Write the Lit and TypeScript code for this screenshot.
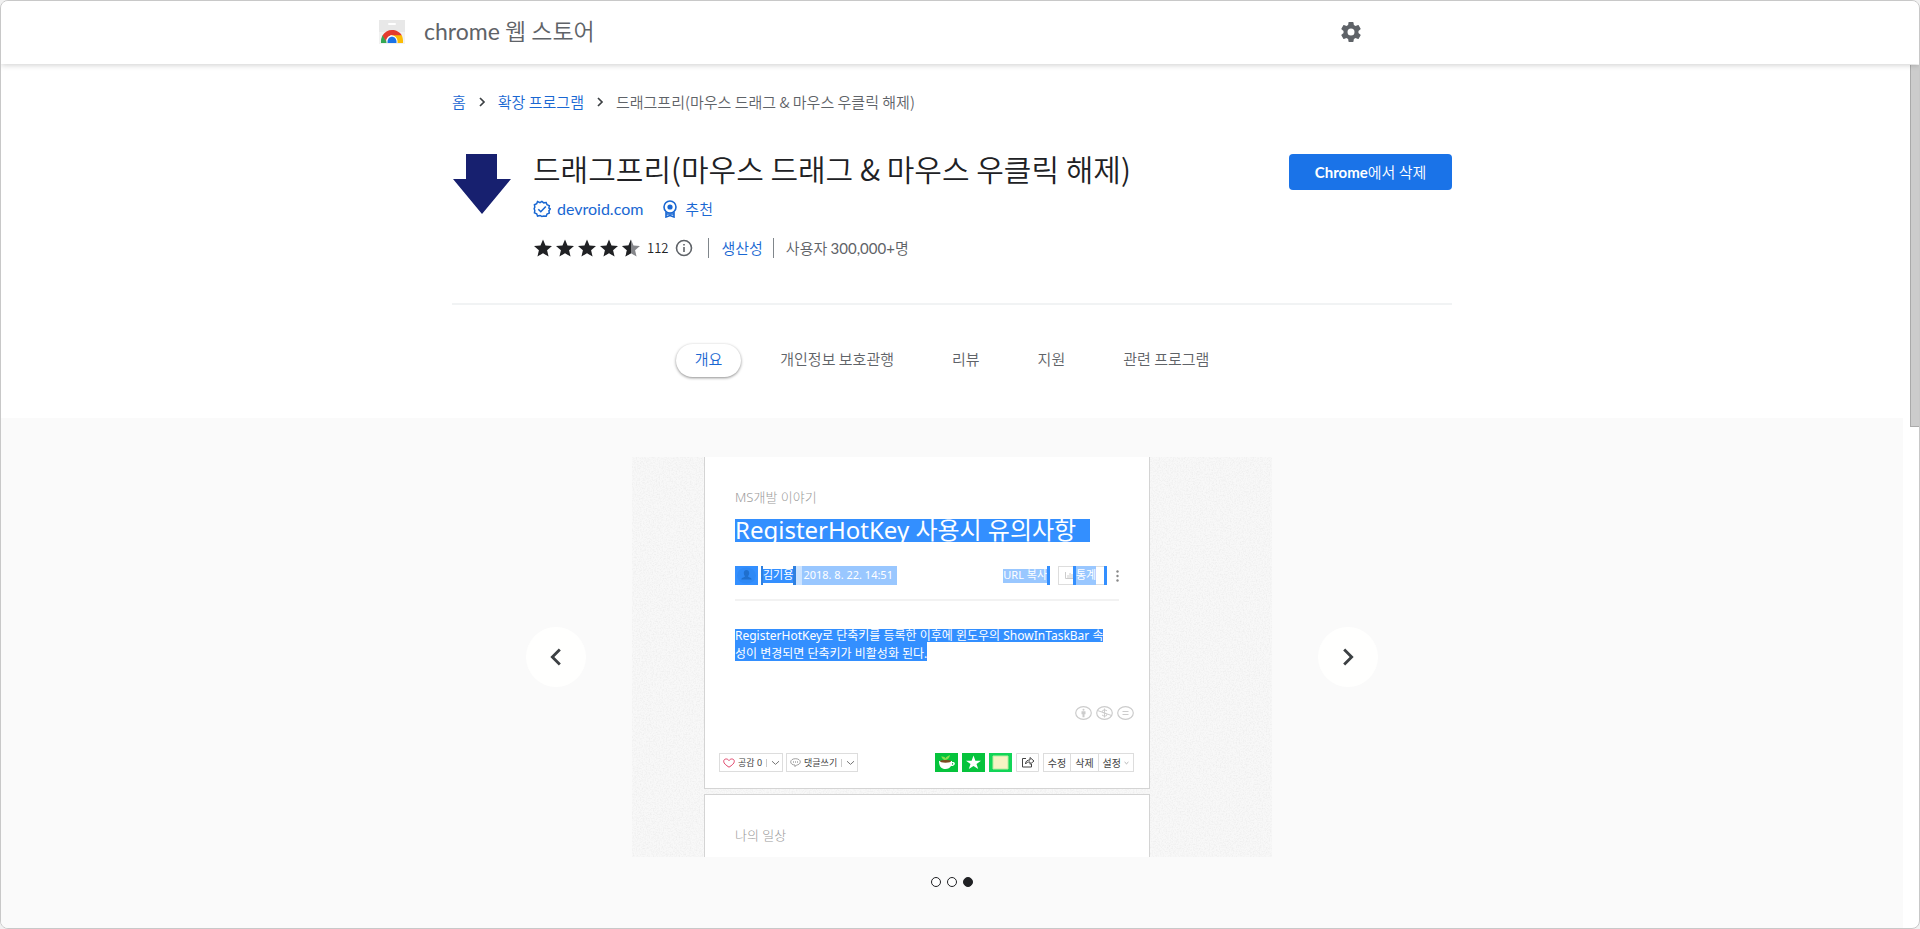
import { LitElement, html, css, svg } from "lit";
import { customElement, state } from "lit/decorators.js";

const STAR = "M12 17.27 18.18 21l-1.64-7.03L22 9.24l-7.19-.61L12 2 9.19 8.63 2 9.24l5.46 4.73L5.82 21z";
const CHEVRON = "M10 6 8.59 7.41 13.17 12l-4.58 4.59L10 18l6-6z";

const star = (half: boolean) => html`<svg class="star" viewBox="2 2 20 19" aria-hidden="true">
  <path d=${STAR} fill=${half ? "#85868a" : "#202124"} />
  ${half ? svg`<path d="M12 2 9.19 8.63 2 9.24l5.46 4.73L5.82 21 12 17.27z" fill="#202124" />` : ""}
</svg>`;

const crumbArrow = html`<svg class="crumb-arrow" viewBox="0 0 10 10" aria-hidden="true">
  <path d="M3 1l4 4-4 4" fill="none" stroke="#3c4043" stroke-width="1.7" />
</svg>`;

const smallArrow = html`<svg class="small-arrow" viewBox="0 0 9 6" aria-hidden="true">
  <path d="M1 1.2 4.5 4.4 8 1.2" fill="none" stroke="#777" />
</svg>`;

/** Third promotional slide: a blog post whose text has been drag-selected. */
@customElement("blog-slide")
export class BlogSlide extends LitElement {
  static styles = css`
    :host {
      display: block;
      position: relative;
      height: 400px;
      overflow: hidden;
      background: #f8f8f8;
      font-family: "Noto Sans", "Noto Sans CJK KR", sans-serif;
      font-size: 12px;
      color: #fff;
    }
    * { box-sizing: border-box; }
    .grain { position: absolute; inset: 0; width: 100%; height: 100%; }
    .posts {
      position: relative;
      width: 446px;
      margin-left: 72px;
      display: flex;
      flex-direction: column;
      gap: 5px;
    }
    .post { background: #fff; border: 1px solid #d4d4d4; padding: 0 30px; }
    .post.first { border-top: 0; height: 332px; }
    .post.second { padding-top: 32px; height: 80px; }
    .category { color: #999; font-size: 13px; font-weight: 300; line-height: 16px; }
    .first .category { padding-top: 32px; }
    h2 {
      margin: 14px 0 0;
      padding-bottom: 2px;
      width: 355px;
      height: 23px;
      line-height: 21px;
      font-size: 24px;
      font-weight: 400;
      background: #338fff;
      white-space: nowrap;
    }
    .meta {
      display: flex;
      align-items: center;
      height: 19px;
      margin-top: 24px;
      font-size: 11px;
      line-height: 12px;
      white-space: nowrap;
    }
    .avatar { width: 23px; height: 19px; margin-right: 3px; background: #338fff; }
    .name { height: 19px; padding: 3px 0 0; border: solid #2f80e0; border-width: 0 3px 0 2px; }
    .name span { display: block; background: #338fff; height: 14px; line-height: 12px; }
    .date { height: 19px; line-height: 18px; padding: 0 4px 0 1px; border-left: 6px solid #cce3ff; background: #99c7ff; }
    .copy { margin-left: auto; height: 14px; line-height: 12px; background: #99c7ff; }
    .bar { width: 3px; height: 19px; background: #338fff; }
    .stats {
      display: flex;
      align-items: center;
      width: 49px;
      height: 19px;
      margin: 0 9px 0 8px;
      border: 1px solid #ddd;
      border-right: 0;
    }
    .stats svg { width: 8px; height: 7px; margin: 0 0 0 6px; }
    .stats b { font-weight: 400; height: 19px; line-height: 17px; background: #99c7ff; border-left: 3px solid #338fff; }
    .stats .bar { margin-left: auto; }
    .kebab { width: 3px; height: 12px; margin-right: 0; }
    hr { margin: 14px 0 0; border: 0; height: 2px; background: #f2f2f2; }
    .body { margin: 28px 0 0; white-space: nowrap; }
    .body span { display: table; background: #338fff; }
    .body span:first-child { line-height: 13px; }
    .body span:last-child { padding-top: 5px; line-height: 14px; }
    .license { display: flex; justify-content: flex-end; gap: 4px; margin: 45px -15px 0 0; }
    .license svg { width: 17px; height: 14px; }
    .tools { display: flex; align-items: stretch; height: 19px; margin: 33px -15px 0 -16px; color: #444; font-size: 10px; }
    .tool {
      display: flex;
      align-items: center;
      gap: 3px;
      padding: 0 2px 0 3px;
      margin-right: 3px;
      border: 1px solid #ddd;
      font-size: 9px;
      line-height: 12px;
      white-space: nowrap;
    }
    .tool i { width: 1px; height: 8px; margin: 0 1px; background: #ccc; }
    .small-arrow { width: 9px; height: 6px; }
    .push { margin-left: auto; }
    .tile { width: 23px; height: 19px; margin-right: 4px; }
    .edit { display: flex; border: 1px solid #ddd; }
    .edit span { display: flex; align-items: center; padding: 0 4px; line-height: 12px; white-space: nowrap; }
    .edit span + span { border-left: 1px solid #ddd; }
    .edit .small-arrow { width: 5px; height: 4px; margin-left: 3px; }
  `;

  render() {
    return html`
      <svg class="grain" aria-hidden="true">
        <filter id="grain" x="0" y="0" width="100%" height="100%">
          <feTurbulence type="fractalNoise" baseFrequency="0.7" numOctaves="2" seed="4" />
          <feColorMatrix values="0 0 0 0 0.6  0 0 0 0 0.6  0 0 0 0 0.6  0.5 0 0 0 -0.2" />
        </filter>
        <rect width="100%" height="100%" filter="url(#grain)" />
      </svg>
      <div class="posts">
        <article class="post first">
          <div class="category">MS개발 이야기</div>
          <h2>RegisterHotKey 사용시 유의사항</h2>
          <div class="meta">
            <svg class="avatar" viewBox="0 0 23 19" aria-hidden="true">
              <ellipse cx="11.500" cy="9.500" rx="9.500" ry="8" fill="#2f89f5" />
              <path d="M11.500 4c2 0 2.700 1.500 2.700 3s-.7 2.700-1.300 3.200c0 1 3.600 1 3.800 3.300H6.300c.2-2.300 3.800-2.300 3.800-3.300-.6-.5-1.300-1.700-1.300-3.200s.7-3 2.700-3z" fill="#1f6fce" />
            </svg>
            <div class="name"><span>김기용</span></div>
            <div class="date">2018. 8. 22. 14:51</div>
            <div class="copy">URL 복사</div>
            <div class="bar"></div>
            <div class="stats">
              <svg viewBox="0 0 8 7" aria-hidden="true"><path d="M.5 0v6.500H8M3 3v3M5 1v5M7 2v4" fill="none" stroke="#ccc" /></svg>
              <b>통계</b>
              <div class="bar"></div>
            </div>
            <svg class="kebab" viewBox="0 0 3 12" aria-hidden="true" fill="#888">
              <circle cx="1.500" cy="1.500" r="1.200" /><circle cx="1.500" cy="6" r="1.200" /><circle cx="1.500" cy="10.500" r="1.200" />
            </svg>
          </div>
          <hr />
          <p class="body">
            <span>RegisterHotKey로 단축키를 등록한 이후에 윈도우의 ShowInTaskBar 속</span>
            <span>성이 변경되면 단축키가 비활성화 된다.</span>
          </p>
          <div class="license">
            <svg viewBox="0 0 17 14" fill="none" stroke="#ccc" aria-hidden="true">
              <ellipse cx="8.500" cy="7" rx="7.800" ry="6.300" stroke-width="1.200" />
              <circle cx="8.500" cy="3.700" r="1" fill="#ccc" stroke="none" /><path d="M6.500 5.200h4v3h-1v3h-2v-3h-1z" fill="#ccc" stroke="none" />
            </svg>
            <svg viewBox="0 0 17 14" fill="none" stroke="#ccc" aria-hidden="true">
              <ellipse cx="8.500" cy="7" rx="7.800" ry="6.300" stroke-width="1.200" />
              <path d="M1.500 4.500l14 5M11 5c-.5-1.300-4.800-1.500-4.800.3S11 7 11 8.800s-4.500 1.700-5 0M8.500 2.500v9" />
            </svg>
            <svg viewBox="0 0 17 14" fill="none" stroke="#ccc" aria-hidden="true">
              <ellipse cx="8.500" cy="7" rx="7.800" ry="6.300" stroke-width="1.200" /><path d="M5.500 5.500h6M5.500 8.500h6" />
            </svg>
          </div>
          <div class="tools">
            <div class="tool">
              <svg width="12" height="10" viewBox="0 0 12 10" aria-hidden="true"><path d="M6 9.200C3 7.200.7 5.500.7 3.300.7.700 4.300 0 6 2.600 7.700 0 11.300.700 11.300 3.300 11.300 5.500 9 7.200 6 9.200z" fill="none" stroke="#e0456a" /></svg>
              공감 0<i></i>${smallArrow}
            </div>
            <div class="tool">
              <svg width="11" height="9" viewBox="0 0 11 9" aria-hidden="true"><path d="M5.500.7c2.800 0 4.800 1.400 4.800 3.200S8.300 7 6.500 7L5 8.600V7C2.500 7 .7 5.700.7 3.900S2.700.7 5.500.7z" fill="none" stroke="#888" stroke-width=".8" /><path d="M3 4h1M5 4h1M7 4h1" stroke="#777" /></svg>
              댓글쓰기<i></i>${smallArrow}
            </div>
            <svg class="tile push" viewBox="0 0 23 19" aria-hidden="true">
              <rect width="23" height="19" fill="#06c33c" />
              <path d="M4 8h13v1.200c4-.8 4 3.800-1 3.800-1 2-3 3-5.500 3C6 16 4 13 4 8z" fill="#fff" /><path d="M17 10v1.800c1.700-.2 1.700-1.800 0-1.800z" fill="#06c33c" />
              <ellipse cx="10.500" cy="8.300" rx="5.500" ry="1.400" fill="#7b4a20" /><path d="M10 7c-3-.5-3-3-4-3.500 3-.3 4 .5 4.500 2C11 3.500 13 3 15 2c-.5 3-2 4.500-5 5z" fill="#8be04e" />
            </svg>
            <svg class="tile" viewBox="0 0 23 19" aria-hidden="true">
              <rect width="23" height="19" fill="#06c33c" /><path d="M11.500 2.500l1.900 5.200 5.600.1-4.500 3.200 1.700 5-4.700-3.100L6.800 16l1.700-5L4 7.800l5.600-.1z" fill="#fff" />
            </svg>
            <svg class="tile" viewBox="0 0 23 19" aria-hidden="true">
              <rect width="23" height="19" fill="#12d557" /><path d="M4 3h15v13H4z" fill="#f7f3c4" stroke="#b8eda0" />
            </svg>
            <svg class="tile" viewBox="0 0 23 19" aria-hidden="true">
              <path d="M.5.500h22v18H.5z" fill="#fff" stroke="#ddd" /><path d="M10 5.500H6.500v8.500h9v-3M9.500 11c0-3 2-4 4.500-4V4.500l4 3.500-4 3.300V9c-2 0-3.500.3-4.500 2z" fill="none" stroke="#444" />
            </svg>
            <div class="edit"><span>수정</span><span>삭제</span><span>설정${smallArrow}</span></div>
          </div>
        </article>
        <article class="post second"><div class="category">나의 일상</div></article>
      </div>
    `;
  }
}

@customElement("app-root")
export class AppRoot extends LitElement {
  static styles = css`
    :host {
      display: block;
      background: #f1f1f1;
      font-family: "Noto Sans CJK KR", sans-serif;
      font-size: 15px;
      font-weight: 350;
      line-height: 20px;
      color: #5f6368;
    }
    * { box-sizing: border-box; }
    a { color: #1967d2; text-decoration: none; }
    button { font: inherit; border: 0; padding: 0; cursor: pointer; }
    .latin { font-family: Lato, sans-serif; font-weight: 400; }
    .frame {
      position: relative;
      display: flex;
      flex-direction: column;
      min-height: 100vh;
      background: #fff;
      border: 1px solid #c8c8c8;
      border-radius: 8px;
      overflow: hidden;
    }
    header { position: relative; z-index: 1; padding-right: 16px; background: #fff; box-shadow: 0 1px 6px rgba(0, 0, 0, 0.2); }
    .bar {
      display: flex;
      align-items: center;
      justify-content: space-between;
      max-width: 1146px;
      height: 63px;
      margin: 0 auto;
      padding: 0 162px 2px 0;
    }
    .brand { display: flex; align-items: center; gap: 19px; color: #5f6368; font-size: 23px; line-height: 32px; }
    .brand svg { width: 26px; height: 24px; }
    .brand span { padding-bottom: 2px; }
    .gear { display: flex; background: none; }
    .gear svg { width: 24px; height: 24px; fill: #5f6368; }
    main { flex: 1; display: flex; flex-direction: column; margin-right: 16px; }
    .thumb { position: absolute; top: 64px; right: 0; width: 9px; height: 362px; background: #ccc; border-left: 1px solid #aaa; border-bottom: 1px solid #aaa; }
    .detail { width: 100%; max-width: 1000px; margin: 0 auto; }
    .crumbs { display: flex; align-items: center; gap: 11px; margin-top: 28px; }
    .crumb-arrow { width: 10px; height: 10px; }
    .summary { display: flex; align-items: flex-start; margin-top: 42px; padding-bottom: 45px; border-bottom: 2px solid #f1f3f4; }
    .app-icon { width: 60px; height: 60px; margin-right: 21px; }
    .info { flex: 1; }
    h1 { margin: 0; color: #202124; font-size: 30px; line-height: 28px; font-weight: 350; }
    .badges { display: flex; align-items: center; margin-top: 17px; gap: 6px; color: #1967d2; }
    .badges a { font-size: 16px; margin-right: 14px; }
    .badges span { margin-left: 2px; }
    .facts { display: flex; align-items: center; margin-top: 19px; }
    .stars { display: flex; gap: 4px; margin-left: 1px; }
    .star { width: 18px; height: 18px; }
    .count { margin: 0 7px; color: #202124; font-size: 13px; }
    .about { width: 18px; height: 18px; margin-right: 15px; }
    .facts .split { padding-left: 12px; margin-right: 10px; border-left: 1px solid #80868b; }
    .remove { width: 163px; height: 36px; border-radius: 4px; background: #1a73e8; color: #fff; }
    .remove .latin { font-weight: 700; }
    .tabs { display: flex; justify-content: center; gap: 20px; margin: 39px 0 41px; }
    .tab { height: 33px; padding: 0 19px 4px; border-radius: 17px; background: #fff; color: #5f6368; }
    .tab.active { color: #1967d2; box-shadow: 0 1px 3px rgba(0, 0, 0, 0.45); }
    .gallery { flex: 1; padding: 39px 0 40px; background: #fafafa; }
    .carousel { display: flex; align-items: center; justify-content: center; gap: 46px; }
    blog-slide { width: 640px; flex: none; font-weight: 400; }
    .nav { display: flex; align-items: center; justify-content: center; width: 60px; height: 60px; border-radius: 50%; background: #fffffe; }
    .nav svg { width: 34px; height: 34px; fill: #3c4043; }
    .nav.prev svg { transform: rotate(180deg); }
    .dots { display: flex; justify-content: center; gap: 6px; margin-top: 20px; }
    .dot { width: 10px; height: 10px; border: 1px solid #202124; border-radius: 50%; background: #fff; }
    .dot.on { background: #202124; }
  `;

  @state() private tab = 0;
  @state() private slide = 2;
  private tabs = ["개요", "개인정보 보호관행", "리뷰", "지원", "관련 프로그램"];

  private move(step: number) {
    this.slide = (this.slide + step + 3) % 3;
  }

  render() {
    return html`
      <div class="frame">
        <header>
          <div class="bar">
            <a class="brand" href="#">
              <svg viewBox="0 0 26 24" aria-hidden="true">
                <path d="M0 0h26v24H0z" fill="#f1f1f1" /><path d="M0 0h26v12H0z" fill="#e8e8e8" /><rect x="9" y="3" width="8" height="2" rx="1" fill="#fff" />
                <path d="M2 23v-2c0-2.500.8-4.500 2-6l4.500 8z" fill="#34a853" />
                <path d="M13 15h9.500c1.200 2 1.700 4.500 1.500 8h-7z" fill="#fbbc04" />
                <path d="M3.500 15.500C5.500 12 9 10 13 10s8 2 9.700 5.300H13c-3 0-5.500 2.500-6 5.700z" fill="#e33b2e" />
                <path d="M7.500 23c-1-10 12-10 11 0z" fill="#fff" /><path d="M8.500 23c-.8-8.200 9.800-8.200 9 0z" fill="#1a73e8" />
              </svg>
              <span><span class="latin">chrome</span> 웹 스토어</span>
            </a>
            <button class="gear" aria-label="설정">
              <svg viewBox="0 0 24 24" aria-hidden="true"><path d="M19.430 12.980c.04-.32.070-.64.070-.98s-.03-.66-.07-.98l2.110-1.650c.19-.15.24-.42.12-.64l-2-3.460c-.12-.22-.39-.3-.61-.22l-2.490 1c-.52-.4-1.080-.73-1.690-.98l-.38-2.650A.49.490 0 0 0 14 2h-4c-.25 0-.46.18-.49.420l-.38 2.650c-.61.250-1.170.590-1.690.980l-2.490-1c-.23-.09-.49 0-.61.220l-2 3.460c-.13.220-.07.490.12.640l2.110 1.650c-.04.320-.07.650-.07.980s.03.660.07.980l-2.110 1.650c-.19.150-.24.420-.12.640l2 3.460c.12.220.39.300.61.220l2.490-1c.52.400 1.080.730 1.690.980l.38 2.650c.03.240.24.420.49.420h4c.25 0 .46-.18.49-.42l.38-2.650c.61-.25 1.170-.59 1.690-.98l2.490 1c.23.090.49 0 .61-.22l2-3.460c.12-.22.070-.49-.12-.64zM12 15.500a3.500 3.500 0 1 1 0-7 3.500 3.500 0 0 1 0 7z" /></svg>
            </button>
          </div>
        </header>
        <div class="thumb"></div>
        <main>
          <div class="detail">
            <nav class="crumbs">
              <a href="#">홈</a>${crumbArrow}<a href="#">확장 프로그램</a>${crumbArrow}
              <span>드래그프리(마우스 드래그 &amp; 마우스 우클릭 해제)</span>
            </nav>
            <section class="summary">
              <svg class="app-icon" viewBox="0 0 60 60" aria-hidden="true"><path d="M14 0h31v25h14L30 60 1 25h13z" fill="#17206f" /></svg>
              <div class="info">
                <h1>드래그프리(마우스 드래그 &amp; 마우스 우클릭 해제)</h1>
                <div class="badges">
                  <svg width="18" height="18" viewBox="0 0 18 18" fill="none" stroke="#1967d2" stroke-width="1.600" aria-hidden="true">
                    <path d="M9 1l2 1.600 2.600-.4.9 2.400 2.400 1-.4 2.500L18 9l-1.500 2 .4 2.500-2.400 1-.9 2.400-2.600-.4L9 17l-2-1-2.600.6-.9-2.300-2.400-1 .4-2.500L.8 9l.7-1.900-.4-2.500 2.400-1 .9-2.400L7 2.400z" transform="translate(.4 .4) scale(.94)" />
                    <path d="M5.300 9.200l2.500 2.500 5-5.200" />
                  </svg>
                  <a class="latin" href="#">devroid.com</a>
                  <svg width="14" height="18" viewBox="0 0 14 18" fill="none" stroke="#1967d2" stroke-width="1.600" aria-hidden="true">
                    <circle cx="7" cy="7" r="6" /><circle cx="7" cy="7" r="2.600" fill="#1967d2" stroke="none" /><path d="M3 12v5l4-1.500 4 1.500v-5M3 14h8" />
                  </svg>
                  <span>추천</span>
                </div>
                <div class="facts">
                  <span class="stars">${[0, 1, 2, 3, 4].map((i) => star(i === 4))}</span>
                  <span class="count">112</span>
                  <svg class="about" viewBox="0 0 18 18" fill="none" stroke="#5f6368" stroke-width="1.600" aria-hidden="true">
                    <circle cx="9" cy="9" r="7.500" /><path d="M9 8v5M9 5v1.600" />
                  </svg>
                  <a class="split" href="#">생산성</a>
                  <span class="split">사용자 <span class="latin">300,000+</span>명</span>
                </div>
              </div>
              <button class="remove"><span class="latin">Chrome</span>에서 삭제</button>
            </section>
            <div class="tabs" role="tablist">
              ${this.tabs.map(
                (name, i) => html`<button class="tab ${i === this.tab ? "active" : ""}" role="tab" aria-selected=${i === this.tab} @click=${() => (this.tab = i)}>${name}</button>`
              )}
            </div>
          </div>
          <section class="gallery">
            <div class="carousel">
              <button class="nav prev" aria-label="이전" @click=${() => this.move(-1)}><svg viewBox="0 0 24 24"><path d=${CHEVRON} /></svg></button>
              <blog-slide></blog-slide>
              <button class="nav" aria-label="다음" @click=${() => this.move(1)}><svg viewBox="0 0 24 24"><path d=${CHEVRON} /></svg></button>
            </div>
            <div class="dots">
              ${[0, 1, 2].map((i) => html`<button class="dot ${i === this.slide ? "on" : ""}" aria-label="슬라이드 ${i + 1}" @click=${() => (this.slide = i)}></button>`)}
            </div>
          </section>
        </main>
      </div>
    `;
  }
}
